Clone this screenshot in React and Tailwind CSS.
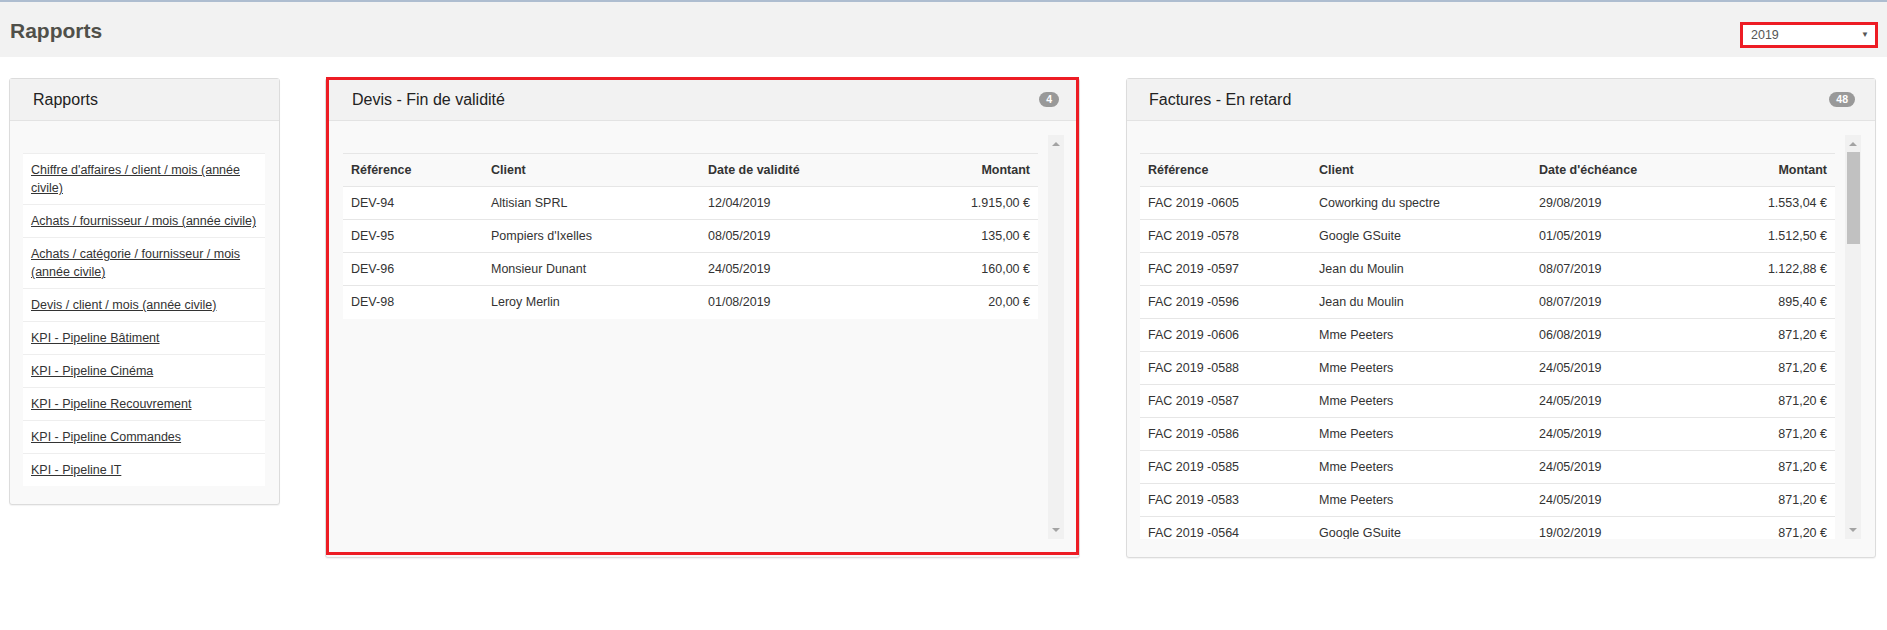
import React from "react";

const devis = [
  ["DEV-94", "Altisian SPRL", "12/04/2019", "1.915,00 €"],
  ["DEV-95", "Pompiers d'Ixelles", "08/05/2019", "135,00 €"],
  ["DEV-96", "Monsieur Dunant", "24/05/2019", "160,00 €"],
  ["DEV-98", "Leroy Merlin", "01/08/2019", "20,00 €"],
];

const factures = [
  ["FAC 2019 -0605", "Coworking du spectre", "29/08/2019", "1.553,04 €"],
  ["FAC 2019 -0578", "Google GSuite", "01/05/2019", "1.512,50 €"],
  ["FAC 2019 -0597", "Jean du Moulin", "08/07/2019", "1.122,88 €"],
  ["FAC 2019 -0596", "Jean du Moulin", "08/07/2019", "895,40 €"],
  ["FAC 2019 -0606", "Mme Peeters", "06/08/2019", "871,20 €"],
  ["FAC 2019 -0588", "Mme Peeters", "24/05/2019", "871,20 €"],
  ["FAC 2019 -0587", "Mme Peeters", "24/05/2019", "871,20 €"],
  ["FAC 2019 -0586", "Mme Peeters", "24/05/2019", "871,20 €"],
  ["FAC 2019 -0585", "Mme Peeters", "24/05/2019", "871,20 €"],
  ["FAC 2019 -0583", "Mme Peeters", "24/05/2019", "871,20 €"],
  ["FAC 2019 -0564", "Google GSuite", "19/02/2019", "871,20 €"],
  ["FAC 2019 -0561", "Google GSuite", "19/02/2019", "871,20 €"],
];

const rapports = [
  "Chiffre d'affaires / client / mois (année civile)",
  "Achats / fournisseur / mois (année civile)",
  "Achats / catégorie / fournisseur / mois (année civile)",
  "Devis / client / mois (année civile)",
  "KPI - Pipeline Bâtiment",
  "KPI - Pipeline Cinéma",
  "KPI - Pipeline Recouvrement",
  "KPI - Pipeline Commandes",
  "KPI - Pipeline IT",
];

const PanelHeader = ({ title, badge, pl }) => (
  <div className={`flex h-[42px] items-center justify-between border-b border-[#e3e3e3] bg-[#f2f2f2] pr-[20px] ${pl}`}>
    <span className="text-[16px] text-[#222]">{title}</span>
    {badge && (
      <span className="rounded-full bg-[#999] px-[7px] text-[10.5px] font-bold leading-[15px] text-white">
        {badge}
      </span>
    )}
  </div>
);

const Scrollbar = ({ thumb }) => (
  <div className="relative ml-[10px] h-[404px] w-[16px] bg-[#f1f1f1]">
    <div className="absolute left-[4px] top-[7px] h-0 w-0 border-x-[4px] border-b-[4px] border-x-transparent border-b-[#a3a3a3]" />
    {thumb && <div className="absolute left-[2px] top-[17px] h-[92px] w-[13px] bg-[#c1c1c1]" />}
    <div className="absolute bottom-[7px] left-[4px] h-0 w-0 border-x-[4px] border-t-[4px] border-x-transparent border-t-[#a3a3a3]" />
  </div>
);

const DataTable = ({ cols, head, rows }) => (
  <table className="w-[695px] table-fixed border-collapse text-[12.5px] text-[#333]">
    <colgroup>
      {cols.map((w, i) => (
        <col key={i} style={{ width: w }} />
      ))}
    </colgroup>
    <thead>
      <tr className="h-[33px] border-t border-[#e6e6e6]">
        {head.map((h, i) => (
          <th key={h} className={`px-[8px] font-bold ${i === 3 ? "text-right" : "text-left"}`}>
            {h}
          </th>
        ))}
      </tr>
    </thead>
    <tbody>
      {rows.map((r) => (
        <tr key={r[0]} className="h-[33px] border-t border-[#e6e6e6] bg-white">
          {r.map((c, i) => (
            <td key={i} className={`whitespace-nowrap px-[8px] ${i === 3 ? "text-right" : ""}`}>
              {c}
            </td>
          ))}
        </tr>
      ))}
    </tbody>
  </table>
);

export default function App() {
  return (
    <div className="min-h-screen bg-white font-['Liberation_Sans',Arial,sans-serif] text-[#333]">
      <div className="flex h-[57px] items-start justify-between border-t-2 border-[#aebdd0] bg-[#f2f2f2] pl-[10px] pr-[9px]">
        <h1 className="mt-[17px] text-[21px] font-bold leading-[24px] text-[#50504a]">Rapports</h1>
        <div className="mt-[20px] flex h-[26px] w-[138px] items-center justify-between border-[3px] border-[#ed1c24] bg-white pl-[8px] pr-[6px] text-[12.5px] text-[#555]">
          <span>2019</span>
          <span className="text-[8px] text-[#555]">▼</span>
        </div>
      </div>

      <div className="flex items-start pl-[9px] pt-[21px]">
        {/* Rapports list */}
        <div className="w-[271px] rounded-[3px] border border-[#dcdcdc] bg-[#f9f9f9] shadow-[0_1px_1px_rgba(0,0,0,0.05)]">
          <PanelHeader title="Rapports" pl="pl-[23px]" />
          <div className="pb-[18px] pl-[13px] pr-[14px] pt-[32px]">
            <ul className="bg-white text-[12.5px] leading-[18px]">
              {rapports.map((r) => (
                <li key={r} className="border-t border-[#eee] py-[7px] pl-[8px] pr-[4px]">
                  <a href="#" className="text-[#333] underline">
                    {r}
                  </a>
                </li>
              ))}
            </ul>
          </div>
        </div>

        {/* Devis */}
        <div className="relative ml-[45px] w-[755px] rounded-[3px] border border-[#dcdcdc] bg-[#f9f9f9] shadow-[0_1px_1px_rgba(0,0,0,0.05)]">
          <PanelHeader title="Devis - Fin de validité" badge="4" pl="pl-[26px]" />
          <div className="flex pb-[18px] pl-[17px] pt-[14px]">
            <div className="h-[404px] w-[695px] overflow-hidden pt-[18px]">
              <DataTable
                cols={[140, 217, 200, 138]}
                head={["Référence", "Client", "Date de validité", "Montant"]}
                rows={devis}
              />
            </div>
            <Scrollbar />
          </div>
          <div className="pointer-events-none absolute -top-[2px] bottom-[2px] left-0 right-0 border-[3px] border-[#ed1c24]" />
        </div>

        {/* Factures */}
        <div className="ml-[46px] w-[750px] rounded-[3px] border border-[#dcdcdc] bg-[#f9f9f9] shadow-[0_1px_1px_rgba(0,0,0,0.05)]">
          <PanelHeader title="Factures - En retard" badge="48" pl="pl-[22px]" />
          <div className="flex pb-[18px] pl-[13px] pt-[14px]">
            <div className="h-[404px] w-[695px] overflow-hidden pt-[18px]">
              <DataTable
                cols={[171, 220, 200, 104]}
                head={["Référence", "Client", "Date d'échéance", "Montant"]}
                rows={factures}
              />
            </div>
            <Scrollbar thumb />
          </div>
        </div>
      </div>
    </div>
  );
}
